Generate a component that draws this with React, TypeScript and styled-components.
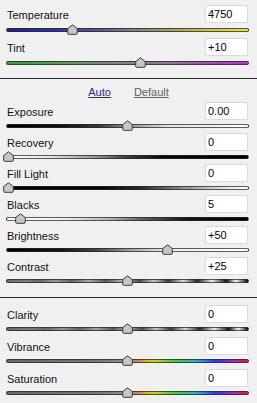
import React from 'react';
import styled, { createGlobalStyle } from 'styled-components';

const Global = createGlobalStyle`
  html, body { margin: 0; padding: 0; background: #f0f0f0; }
  body { font-family: "Liberation Sans", Arial, sans-serif; font-size: 11px; color: #000; }
`;

const Panel = styled.div`
  width: 257px;
  height: 403px;
  box-sizing: border-box;
  padding-top: 5px;
  background: #f0f0f0;
  display: flex;
  flex-direction: column;
  overflow: hidden;
`;

const Group = styled.div<{ $gap: number; $mt?: number }>`
  display: flex;
  flex-direction: column;
  gap: ${(p) => p.$gap}px;
  margin-top: ${(p) => p.$mt ?? 0}px;
  padding: 0 8px 0 6px;
`;

const Row = styled.div`
  display: flex;
  flex-direction: column;
`;

const Header = styled.div`
  height: 18px;
  display: flex;
  align-items: center;
  justify-content: space-between;
`;

const Label = styled.span`
  margin-left: 1px;
  padding-top: 2px;
  font-size: 11px;
  line-height: 13px;
  color: #111;
`;

const ValueBox = styled.div`
  width: 43px;
  height: 18px;
  margin-right: 1px;
  box-sizing: border-box;
  border: 1px solid #dadada;
  background: #fff;
  padding-left: 2px;
  font-size: 11px;
  line-height: 16px;
  color: #000;
`;

const SliderArea = styled.div`
  position: relative;
  height: 12px;
`;

const Track = styled.div<{ $bg: string; $top: number }>`
  margin-top: ${(p) => p.$top}px;
  height: 4px;
  box-sizing: border-box;
  border: 1px solid rgba(40, 40, 40, 0.75);
  border-radius: 2px;
  background: ${(p) => p.$bg};
`;

const ThumbSvg = styled.svg<{ $top: number }>`
  position: absolute;
  top: ${(p) => p.$top}px;
  width: 11px;
  height: 11px;
  display: block;
`;

const Divider = styled.div<{ $mt: number }>`
  height: 1px;
  background: #2c2c2c;
  margin-top: ${(p) => p.$mt}px;
`;

const LinkRow = styled.div`
  margin-top: 7px;
  height: 13px;
  display: flex;
  justify-content: center;
  gap: 23px;
`;

const LinkText = styled.span<{ $active: boolean }>`
  font-size: 11px;
  line-height: 13px;
  text-decoration: underline;
  color: ${(p) => (p.$active ? '#1f2a9a' : '#636363')};
`;

const G = {
  temp: 'linear-gradient(90deg, #1a1f90 0%, #2e3592 20%, #55578e 38%, #7c7c86 50%, #9a9670 64%, #c2ba58 80%, #e8e03c 100%)',
  tint: 'linear-gradient(90deg, #2ea82e 0%, #48a048 18%, #6e8e6e 38%, #868086 52%, #9a6aa2 68%, #ac46bc 84%, #bc2ed0 100%)',
  exposure: 'linear-gradient(90deg, #000 0%, #0c0c0c 22%, #3a3a3a 38%, #9a9a9a 52%, #e2e2e2 66%, #fff 100%)',
  recovery: 'linear-gradient(90deg, #fff 0%, #e4e4e4 18%, #9a9a9a 36%, #3a3a3a 50%, #080808 64%, #000 100%)',
  fill: 'linear-gradient(90deg, #000 0%, #050505 40%, #2a2a2a 56%, #8a8a8a 72%, #dcdcdc 88%, #fff 100%)',
  blacks: 'linear-gradient(90deg, #fff 0%, #f2f2f2 22%, #b8b8b8 42%, #5a5a5a 58%, #141414 74%, #000 100%)',
  brightness: 'linear-gradient(90deg, #000 0%, #111 22%, #4a4a4a 38%, #a8a8a8 52%, #ececec 66%, #fff 100%)',
  contrast:
    'linear-gradient(90deg, #6e6e6e 0%, #7c7c7c 8%, #6a6a6a 14%, #9a9a9a 20%, #626262 27%, #a8a8a8 34%, #585858 41%, #b4b4b4 48%, #4c4c4c 55%, #c6c6c6 61%, #3a3a3a 67%, #d8d8d8 73%, #262626 79%, #ececec 85%, #141414 91%, #fafafa 95%, #000 100%)',
  clarity:
    'linear-gradient(90deg, #6a6a6a 0%, #7a7a7a 10%, #686868 16%, #949494 23%, #606060 30%, #a4a4a4 37%, #585858 44%, #b0b0b0 50%, #4a4a4a 56%, #c4c4c4 62%, #383838 68%, #d6d6d6 74%, #242424 80%, #eaeaea 86%, #121212 92%, #f8f8f8 96%, #000 100%)',
  color:
    'linear-gradient(90deg, #686868 0%, #727272 30%, #7e7a84 42%, #8a8a8c 48%, #a08c80 52%, #c88a40 55%, #d8b830 58%, #c0d030 62%, #70c440 67%, #34c070 73%, #30b4c4 77%, #3080dc 82%, #3040d0 86%, #6a30c8 90%, #aa2ab0 94%, #cc2058 100%)',
};

type S = { label: string; value: string; bg: string; center: number };

const Thumb = ({ center, top }: { center: number; top: number }) => (
  <ThumbSvg $top={top} viewBox="0 0 11 11" style={{ left: center - 6 - 5.5 }}>
    <path
      d="M5.5 0.8 L10.3 4.6 V9.2 Q10.3 10.3 9.2 10.3 H1.8 Q0.7 10.3 0.7 9.2 V4.6 Z"
      fill="#c6c6c6"
      stroke="#3a3a3a"
      strokeWidth="1"
      strokeLinejoin="round"
    />
  </ThumbSvg>
);

const SliderRow = ({ s, trackTop }: { s: S; trackTop: number }) => (
  <Row>
    <Header>
      <Label>{s.label}</Label>
      <ValueBox>{s.value}</ValueBox>
    </Header>
    <SliderArea>
      <Track $bg={s.bg} $top={trackTop} />
      <Thumb center={s.center} top={trackTop - 4} />
    </SliderArea>
  </Row>
);

const group1: S[] = [
  { label: 'Temperature', value: '4750', bg: G.temp, center: 72.5 },
  { label: 'Tint', value: '+10', bg: G.tint, center: 140 },
];

const group2: S[] = [
  { label: 'Exposure', value: '0.00', bg: G.exposure, center: 127.5 },
  { label: 'Recovery', value: '0', bg: G.recovery, center: 8.5 },
  { label: 'Fill Light', value: '0', bg: G.fill, center: 8.5 },
  { label: 'Blacks', value: '5', bg: G.blacks, center: 20.5 },
  { label: 'Brightness', value: '+50', bg: G.brightness, center: 167 },
  { label: 'Contrast', value: '+25', bg: G.contrast, center: 127.5 },
];

const group3: S[] = [
  { label: 'Clarity', value: '0', bg: G.clarity, center: 127.5 },
  { label: 'Vibrance', value: '0', bg: G.color, center: 127.5 },
  { label: 'Saturation', value: '0', bg: G.color, center: 127.5 },
];

export default function App() {
  return (
    <>
      <Global />
      <Panel>
        <Group $gap={3}>
          {group1.map((s) => (
            <SliderRow key={s.label} s={s} trackTop={5} />
          ))}
        </Group>
        <Divider $mt={10} />
        <LinkRow>
          <LinkText $active>Auto</LinkText>
          <LinkText $active={false}>Default</LinkText>
        </LinkRow>
        <Group $gap={1} $mt={3}>
          {group2.map((s) => (
            <SliderRow key={s.label} s={s} trackTop={4} />
          ))}
        </Group>
        <Divider $mt={10} />
        <Group $gap={2} $mt={7}>
          {group3.map((s) => (
            <SliderRow key={s.label} s={s} trackTop={4} />
          ))}
        </Group>
      </Panel>
    </>
  );
}
